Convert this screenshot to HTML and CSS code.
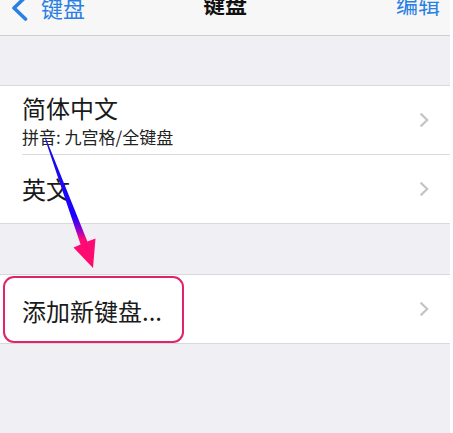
FILE: index.html
```html
<!DOCTYPE html>
<html lang="zh-CN">
<head>
<meta charset="utf-8">
<title>键盘</title>
<link rel="stylesheet" href="styles.css">
</head>
<body>
<div class="screen">
  <header class="nav">
    <div class="nav-back">
      <svg class="back-icon" width="18" height="26" viewBox="0 0 18 26"><path d="M15.5 2 L4 13 L15.5 24" fill="none" stroke="#2a80e2" stroke-width="3.6" stroke-linecap="round" stroke-linejoin="round"/></svg>
      <span>键盘</span>
    </div>
    <div class="nav-title">键盘</div>
    <div class="nav-edit">编辑</div>
  </header>

  <div class="gap"></div>

  <section class="group">
    <div class="row">
      <div class="row-inner">
        <div class="row-text">
          <div class="row-title">简体中文</div>
          <div class="row-sub">拼音: 九宫格/全键盘</div>
        </div>
        <svg class="chev" width="10" height="16" viewBox="0 0 10 16"><path d="M1.6 1.6 L8.2 8 L1.6 14.4" fill="none" stroke="#c4c4c9" stroke-width="2.2"/></svg>
      </div>
    </div>
    <div class="row">
      <div class="row-inner">
        <div class="row-text">
          <div class="row-title">英文</div>
        </div>
        <svg class="chev" width="10" height="16" viewBox="0 0 10 16"><path d="M1.6 1.6 L8.2 8 L1.6 14.4" fill="none" stroke="#c4c4c9" stroke-width="2.2"/></svg>
      </div>
    </div>
  </section>

  <div class="gap gap-2"></div>

  <section class="group">
    <div class="row row-add">
      <div class="row-inner">
        <div class="row-text">
          <div class="row-title">添加新键盘...</div>
        </div>
        <svg class="chev" width="10" height="16" viewBox="0 0 10 16"><path d="M1.6 1.6 L8.2 8 L1.6 14.4" fill="none" stroke="#c4c4c9" stroke-width="2.2"/></svg>
      </div>
      <div class="highlight"></div>
    </div>
  </section>

  <svg class="arrow" width="453" height="433" viewBox="0 0 453 433">
    <defs>
      <linearGradient id="ag" gradientUnits="userSpaceOnUse" x1="0" y1="138" x2="0" y2="268">
        <stop offset="0" stop-color="#1a10e8"/>
        <stop offset="0.6" stop-color="#1c00ff"/>
        <stop offset="0.7" stop-color="#8a00d0"/>
        <stop offset="0.78" stop-color="#ff0a78"/>
        <stop offset="1" stop-color="#ff0a6a"/>
      </linearGradient>
    </defs>
    <polygon points="44.6,137.8 45.6,137.6 87.4,241.6 95.5,238.4 93,268 73.5,247.4 80.6,244.4" fill="url(#ag)"/>
  </svg>
</div>
</body>
</html>
```

FILE: styles.css
```css
html, body {
  margin: 0;
  padding: 0;
  background: #ffffff;
}

body {
  width: 453px;
  height: 433px;
  overflow: hidden;
  font-family: "Noto Sans CJK SC", "Noto Sans", sans-serif;
  color: #1a1a1a;
}

.screen {
  position: relative;
  width: 450px;
  height: 433px;
  background: #efeff4;
  overflow: hidden;
}

.nav {
  height: 36px;
  background: #f7f7f8;
  border-bottom: 1px solid #cfcfd3;
  box-sizing: border-box;
  display: grid;
  grid-template-columns: 1fr auto 1fr;
  align-items: start;
  padding: 0 10px 0 10px;
  overflow: hidden;
}

.nav > * {
  margin-top: -8px;
  font-size: 22px;
  line-height: 22px;
}

.nav-back {
  display: flex;
  align-items: center;
  color: #2a80e2;
}

.back-icon {
  margin-top: 3px;
  margin-right: 13px;
  flex: none;
}

.nav-title {
  font-weight: 700;
  color: #111;
}

.nav-edit {
  justify-self: end;
  color: #2a80e2;
}

.gap {
  height: 49px;
}

.gap-2 {
  height: 50px;
}

.group {
  background: #ffffff;
  border-top: 1px solid #d9d9dd;
  border-bottom: 1px solid #d9d9dd;
}

.row {
  padding-left: 22px;
}

.row-inner {
  height: 69px;
  box-sizing: border-box;
  display: flex;
  align-items: center;
  padding-right: 21px;
  border-bottom: 1px solid #dcdce0;
}

.row:last-child .row-inner {
  border-bottom: none;
  height: 68px;
}

.row-text {
  flex: 1;
  display: flex;
  flex-direction: column;
  gap: 8px;
}

.row-title {
  font-size: 24px;
  line-height: 24px;
  color: #1a1a1a;
}

.row-sub {
  font-size: 17px;
  line-height: 17px;
  color: #222;
}

.chev {
  flex: none;
}

.row-add {
  position: relative;
}

.row-add .row-text {
  padding-top: 4px;
}

.highlight {
  position: absolute;
  left: 3px;
  top: 1px;
  width: 181px;
  height: 67px;
  box-sizing: border-box;
  border: 2.5px solid #e0236c;
  border-radius: 11px;
}

.arrow {
  position: absolute;
  left: 0;
  top: 0;
  pointer-events: none;
}
```
